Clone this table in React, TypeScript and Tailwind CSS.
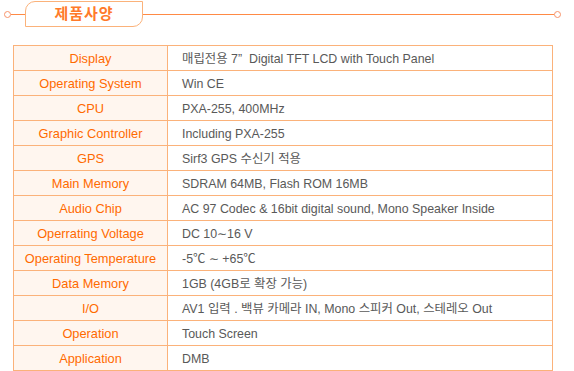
const specs: [string, string][] = [
  ["Display", "매립전용 7”  Digital TFT LCD with Touch Panel"],
  ["Operating System", "Win CE"],
  ["CPU", "PXA-255, 400MHz"],
  ["Graphic Controller", "Including PXA-255"],
  ["GPS", "Sirf3 GPS 수신기 적용"],
  ["Main Memory", "SDRAM 64MB, Flash ROM 16MB"],
  ["Audio Chip", "AC 97 Codec & 16bit digital sound, Mono Speaker Inside"],
  ["Operrating Voltage", "DC 10∼16 V"],
  ["Operating Temperature", "-5℃ ∼ +65℃"],
  ["Data Memory", "1GB (4GB로 확장 가능)"],
  ["I/O", "AV1 입력 . 백뷰 카메라 IN, Mono 스피커 Out, 스테레오 Out"],
  ["Operation", "Touch Screen"],
  ["Application", "DMB"],
];

export default function App() {
  return (
    <div
      className="w-[574px] h-[371px] bg-white overflow-hidden"
      style={{ fontFamily: '"Liberation Sans", "Noto Sans CJK KR", sans-serif' }}
    >
      {/* section title */}
      <div className="flex items-center h-[27px] pt-[1px] pr-[13px] pl-[4px]">
        <div className="w-[7px] h-[7px] rounded-full border border-[#f7936a] bg-white" />
        <div className="w-[14px] h-px bg-[#ff8a45]" />
        <div className="flex h-[26px] w-[118px] items-center justify-center rounded-tl-[10px] rounded-br-[10px] border border-[#fbb27a]">
          <span className="text-[15px] font-bold tracking-[1px] text-[#ff7a2a]">제품사양</span>
        </div>
        <div className="h-px flex-1 bg-[#ff8a45]" />
        <div className="w-[7px] h-[7px] rounded-full border border-[#f7936a] bg-white" />
      </div>

      <table className="mt-[18px] ml-[13px] w-[540px] border-collapse">
        <tbody>
          {specs.map(([k, v]) => (
            <tr key={k} className="h-[25px]">
              <td className="w-[154px] border border-[#fbb27a] bg-[#fff6ef] p-0 pt-[3px] text-center text-[12.8px] text-[#ff6a00] leading-none">
                {k}
              </td>
              <td className="border border-[#fbb27a] p-0 pt-[3px] pl-[14px] text-[12.4px] text-[#595959] leading-none whitespace-pre">
                {v}
              </td>
            </tr>
          ))}
        </tbody>
      </table>
    </div>
  );
}
